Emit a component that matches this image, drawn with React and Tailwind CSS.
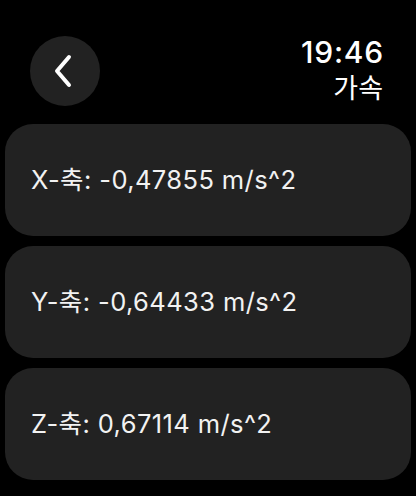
const rows = [
  { axis: 'X', value: '-0,47855' },
  { axis: 'Y', value: '-0,64433' },
  { axis: 'Z', value: '0,67114' },
]

export default function App() {
  return (
    <div
      className="w-[416px] h-[496px] overflow-hidden bg-black text-white"
      style={{ fontFamily: 'Inter, "Noto Sans CJK KR", sans-serif' }}
    >
      <div className="flex items-start justify-between pl-[30px] pr-[33px] pt-[36px] h-[124px]">
        <button className="w-[70px] h-[70px] rounded-full bg-[#222222] flex items-center justify-center">
          <svg width="20" height="34" viewBox="0 0 20 34" fill="none" className="-ml-[4px]">
            <path d="M16 3 L4 17 L16 31" stroke="white" strokeWidth="4" strokeLinecap="round" strokeLinejoin="round" />
          </svg>
        </button>
        <div className="flex flex-col items-end">
          <span className="text-[30px] leading-[32px] font-medium tracking-[0.8px] -mr-[1px]">19:46</span>
          <span className="text-[27px] leading-[32px] mt-[5px]">가속</span>
        </div>
      </div>

      <div className="flex flex-col gap-[10px] px-[5px]">
        {rows.map((r) => (
          <div key={r.axis} className="h-[112px] rounded-[28px] bg-[#222222] flex items-center pl-[26px]">
            <span className="text-[25.5px] tracking-[0.4px] text-[#f2f2f2]">
              {r.axis}-축: {r.value} m/s^2
            </span>
          </div>
        ))}
      </div>
    </div>
  )
}
